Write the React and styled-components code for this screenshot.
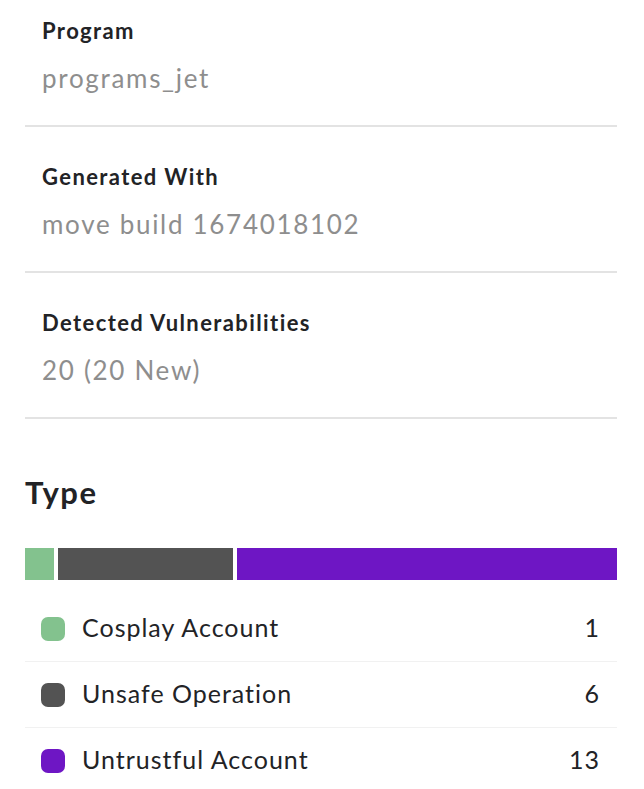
import React from 'react';
import styled, { createGlobalStyle } from 'styled-components';

const GlobalStyle = createGlobalStyle`
  body {
    margin: 0;
    background: #ffffff;
    font-family: Lato, "Open Sans", sans-serif;
    color: #222222;
  }
`;

const Page = styled.div`
  width: 592px;
  margin-left: 25px;
`;

const InfoBlock = styled.div`
  padding: ${(p) => (p.first ? '17px' : '36px')} 17px 31px;
  border-bottom: 2px solid #e3e3e3;
`;

const Label = styled.div`
  font-size: 22px;
  line-height: 28px;
  font-weight: 700;
  color: #222326;
  letter-spacing: 1.4px;
`;

const Value = styled.div`
  margin-top: 17px;
  font-size: 26px;
  line-height: 32px;
  color: #8e8e8e;
  letter-spacing: 1.7px;
`;

const TypeSection = styled.section`
  padding-top: 55px;
`;

const Heading = styled.h2`
  margin: 0;
  font-size: 31px;
  line-height: 37px;
  font-weight: 700;
  color: #222326;
  letter-spacing: 1.5px;
`;

const Bar = styled.div`
  display: flex;
  gap: 4px;
  height: 32px;
  margin-top: 37px;
`;

const Segment = styled.div`
  flex: ${(p) => p.count} 1 0;
  background: ${(p) => p.color};
`;

const Legend = styled.ul`
  list-style: none;
  margin: 16px 0 0;
  padding: 0;
`;

const Row = styled.li`
  display: flex;
  align-items: center;
  height: 65px;
  padding: 0 17px 0 16px;
  border-bottom: 1px solid #f1f1f1;

  &:last-child {
    border-bottom: none;
  }
`;

const Dot = styled.span`
  width: 24px;
  height: 24px;
  border-radius: 7px;
  background: ${(p) => p.color};
  flex-shrink: 0;
`;

const Name = styled.span`
  flex: 1;
  margin-left: 17px;
  font-size: 25px;
  line-height: 30px;
  margin-top: -3px;
  color: #222326;
  letter-spacing: 1px;
`;

const Count = styled.span`
  font-size: 25px;
  line-height: 30px;
  margin-top: -3px;
  color: #222326;
  letter-spacing: 1px;
`;

const info = [
  { label: 'Program', value: 'programs_jet' },
  { label: 'Generated With', value: 'move build 1674018102' },
  { label: 'Detected Vulnerabilities', value: '20 (20 New)' },
];

const types = [
  { name: 'Cosplay Account', count: 1, color: '#83c28e' },
  { name: 'Unsafe Operation', count: 6, color: '#535353' },
  { name: 'Untrustful Account', count: 13, color: '#6e16c4' },
];

const App = () => {
  return (
    <Page>
      <GlobalStyle />
      {info.map((item, i) => (
        <InfoBlock key={item.label} first={i === 0}>
          <Label>{item.label}</Label>
          <Value>{item.value}</Value>
        </InfoBlock>
      ))}
      <TypeSection>
        <Heading>Type</Heading>
        <Bar>
          {types.map((t) => (
            <Segment key={t.name} count={t.count} color={t.color} />
          ))}
        </Bar>
        <Legend>
          {types.map((t) => (
            <Row key={t.name}>
              <Dot color={t.color} />
              <Name>{t.name}</Name>
              <Count>{t.count}</Count>
            </Row>
          ))}
        </Legend>
      </TypeSection>
    </Page>
  );
};

export default App;
